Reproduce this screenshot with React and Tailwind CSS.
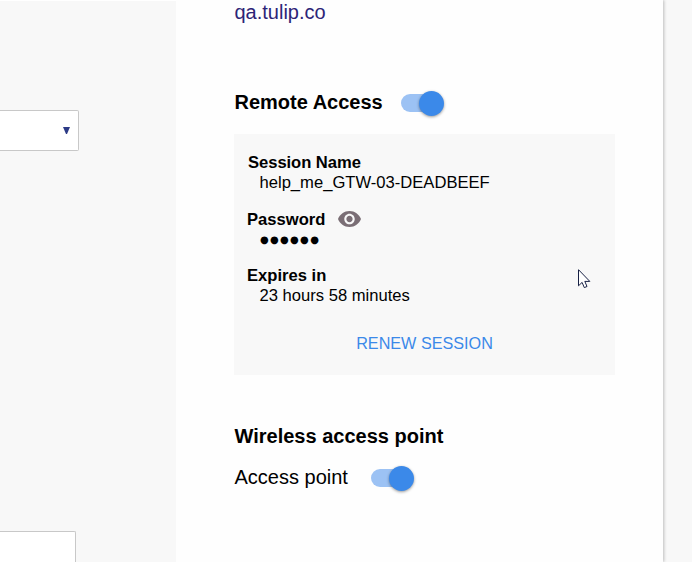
function Toggle() {
  return (
    <div className="flex h-[26px] w-[43px] items-center">
      <div className="flex h-[18px] w-[42.5px] items-center justify-end rounded-full bg-linear-to-r from-[#9cc2f4] from-70% to-transparent to-70%">
        <div className="size-[25px] shrink-0 rounded-full bg-[#3b89e9] shadow-[0_1px_3px_rgba(0,0,0,0.4)]" />
      </div>
    </div>
  );
}

function EyeIcon() {
  return (
    <svg className="mb-[2px] h-[16px] w-[23px]" viewBox="1 4.5 22 15" preserveAspectRatio="none" fill="#7a6e75">
      <path d="M12 4.5C7 4.5 2.73 7.61 1 12c1.73 4.39 6 7.5 11 7.5s9.27-3.11 11-7.5c-1.73-4.39-6-7.5-11-7.5zM12 17c-2.76 0-5-2.24-5-5s2.24-5 5-5 5 2.24 5 5-2.24 5-5 5zm0-8c-1.66 0-3 1.34-3 3s1.34 3 3 3 3-1.34 3-3-1.34-3-3-3z" />
    </svg>
  );
}

export default function App() {
  return (
    <div className="relative flex h-[562px] w-[692px] overflow-hidden bg-[#f8f8f8] font-['Liberation_Sans',Arial,sans-serif] text-black">
      <aside className="relative z-10 flex w-[176px] shrink-0 flex-col justify-between border-t border-white bg-[#f8f8f8] pt-[109px]">
        <div className="flex h-[41px] w-[79px] items-center justify-end rounded-r-[2px] border border-l-0 border-[#c8c8c8] bg-white pr-[8px]">
          <svg className="h-[7px] w-[7px]" viewBox="0 0 7 7" fill="#2c3a86">
            <path d="M0 0h7L4 7H3z" />
          </svg>
        </div>
        <div className="h-[31px] w-[76px] rounded-tr-[2px] border-t border-r border-[#c8c8c8] bg-white" />
      </aside>
      <main className="w-[487px] shrink-0 bg-[#fefefe] pl-[58px] shadow-[1px_0_3px_rgba(0,0,0,0.24)]">
        <p className="h-[90px] pl-[0.5px] text-[20px] leading-6 text-[#2d2477]">qa.tulip.co</p>
        <div className="flex h-[44px] items-start">
          <h2 className="w-[167px] pl-[0.5px] text-[20px] leading-6 font-bold">Remote Access</h2>
          <Toggle />
        </div>
        <section className="h-[241px] w-[381px] bg-[#f8f8f8] pt-[19px] pl-[13px] text-[16.6px] leading-5">
          <h3 className="pl-px font-bold tracking-[-0.05px]">Session Name</h3>
          <p className="pl-[12.5px]">help_me_GTW-03-DEADBEEF</p>
          <div className="mt-[17px] flex items-center">
            <h3 className="w-[91px] font-bold">Password</h3>
            <EyeIcon />
          </div>
          <p className="pl-[13px] font-['DejaVu_Sans',sans-serif] text-[10px] tracking-[1.3px]">●●●●●●</p>
          <h3 className="mt-[16px] font-bold">Expires in</h3>
          <p className="pl-[12.5px]">23 hours 58 minutes</p>
          <button className="mt-[27px] block w-[355px] text-center text-[16.2px] text-[#3b89e9]">RENEW SESSION</button>
        </section>
        <h2 className="mt-[49px] pl-[0.5px] text-[20px] leading-6 font-bold">Wireless access point</h2>
        <div className="mt-[17px] flex items-start">
          <p className="w-[137px] pl-[0.5px] text-[20px] leading-6">Access point</p>
          <Toggle />
        </div>
      </main>
      <svg className="absolute top-[269px] left-[578px] h-[20px] w-[13px]" viewBox="0 0 13 20" fill="white" stroke="#172044" strokeWidth="1">
        <path d="M.5.7v16.1l3.6-3.4 2.2 5.2 2.7-1.1-2.2-5.1h5z" />
      </svg>
    </div>
  );
}
